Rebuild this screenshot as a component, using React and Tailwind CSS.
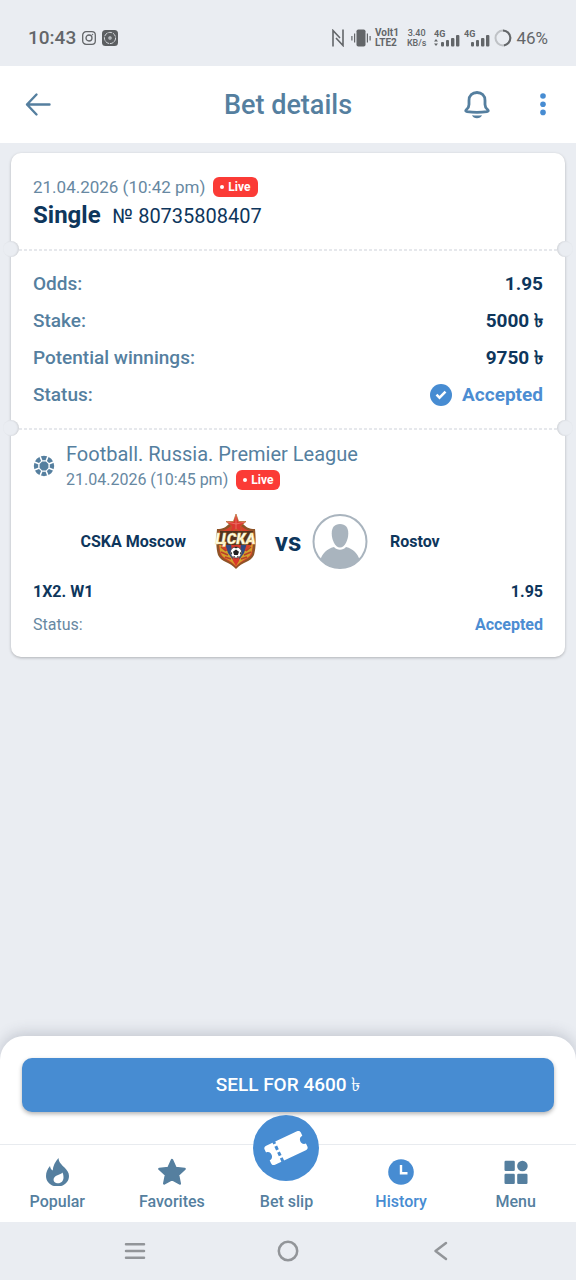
import React from "react";

const summary = [
  { label: "Odds:", value: "1.95" },
  { label: "Stake:", value: "5000 ৳" },
  { label: "Potential winnings:", value: "9750 ৳" },
];

function LiveBadge() {
  return (
    <span className="inline-flex h-5 items-center gap-1 rounded-md bg-[#fb3b36] px-[7px] text-xs font-bold text-white">
      <span className="h-1 w-1 rounded-full bg-white" />
      Live
    </span>
  );
}

// Perforated line with a round notch on each edge of the ticket
function TearLine() {
  return (
    <div className="relative h-0.5">
      <div className="mx-2 h-0.5 bg-[repeating-linear-gradient(90deg,#e6e8ec_0_3px,transparent_3px_5px)]" />
      <span className="absolute -left-2 -top-2 h-4 w-4 rounded-full bg-[#eaedf2] shadow-[inset_-1px_0_2px_rgba(0,0,0,0.12)]" />
      <span className="absolute -right-2 -top-2 h-4 w-4 rounded-full bg-[#eaedf2] shadow-[inset_1px_0_2px_rgba(0,0,0,0.12)]" />
    </div>
  );
}

function SignalIcon({ data }) {
  return (
    <svg width="26" height="18" viewBox="0 0 26 18" fill="#636669">
      <text x="0" y="8" fontSize="9" fontWeight="700" fontFamily="Roboto, sans-serif">4G</text>
      {data && <path d="M0 12.500l2-2.500 2 2.500zM0 14.500h4l-2 2.500z" />}
      <rect x="7" y="13" width="3" height="4.500" rx="1" />
      <rect x="12" y="11" width="3" height="6.500" rx="1" />
      <rect x="17" y="9" width="3.400" height="8.500" rx="1" />
      <rect x="22" y="6" width="3.400" height="11.500" rx="1" />
    </svg>
  );
}

function StatusBar() {
  return (
    <div className="flex h-[66px] items-center justify-between px-7 pt-2.5 text-[#636669]">
      <div className="flex items-center">
        <span className="text-[19px] leading-5 font-medium">10:43</span>
        <svg className="ml-1.5" width="14" height="14" viewBox="0 0 14 14" fill="none" stroke="#636669" strokeWidth="1.300">
          <rect x="0.700" y="0.700" width="12.600" height="12.600" rx="3.400" />
          <circle cx="7" cy="7" r="3" />
          <circle cx="10.500" cy="3.500" r="0.500" fill="#636669" strokeWidth="0.400" />
        </svg>
        <svg className="ml-1.5" width="16" height="16" viewBox="0 0 16 16" fill="none">
          <rect width="16" height="16" rx="3.500" fill="#5b5e61" />
          <circle cx="8" cy="8" r="5.600" stroke="#d5d8dc" strokeWidth="1" strokeDasharray="4 0.800" />
          <circle cx="8" cy="8" r="1.700" fill="#cfd2d6" />
          <circle cx="8" cy="8" r="0.600" fill="#5b5e61" />
        </svg>
      </div>
      <div className="flex items-center">
        <svg width="12" height="18" viewBox="0 0 12 18" fill="none" stroke="#636669" strokeWidth="1.600">
          <path d="M1 17.500V1.500L8 9M11 .500v16L4 9" />
        </svg>
        <svg className="ml-[7px]" width="20" height="18" viewBox="0 0 20 18" fill="#636669">
          <rect x="5.500" y="0.500" width="9" height="17" rx="1.800" />
          <path d="M3 4.500h1.200v9H3zM0.300 7h1.200v4.500H.3zM15.800 4.500H17v9h-1.200zM18.500 7h1.200v4.500h-1.200z" />
        </svg>
        <div className="ml-1 text-[10px] leading-[10px] font-bold">
          VoIt1
          <br />
          LTE2
        </div>
        <div className="ml-2 text-center text-[9px] leading-[10px] font-medium">
          3.40
          <br />
          KB/s
        </div>
        <div className="ml-2 flex gap-1">
          <SignalIcon data />
          <SignalIcon />
        </div>
        <svg className="ml-1" width="18" height="18" viewBox="0 0 18 18" fill="none" strokeWidth="2">
          <circle cx="9" cy="9" r="7.500" stroke="#bfc2c6" />
          <path d="M9 1.500a7.500 7.500 0 0 1 1 14.900" stroke="#636669" />
        </svg>
        <span className="ml-1 text-[17px] leading-5">46%</span>
      </div>
    </div>
  );
}

function Header() {
  return (
    <header className="grid h-[77px] grid-cols-[1fr_auto_1fr] items-center bg-white px-6 text-[#557f9f]">
      <button aria-label="Back" className="justify-self-start">
        <svg width="28" height="28" viewBox="0 0 28 28" fill="none" stroke="currentColor" strokeWidth="2.400" strokeLinecap="round" strokeLinejoin="round">
          <path d="M25.500 13.500H3M12.500 3.500L3 13.500l9.500 10" />
        </svg>
      </button>
      <h1 className="text-[27px] leading-8 font-medium">Bet details</h1>
      <div className="flex items-center gap-[43px] justify-self-end">
        <button aria-label="Notifications">
          <svg width="28" height="30" viewBox="0 0 28 30" fill="none" stroke="currentColor" strokeWidth="2.800" strokeLinejoin="round">
            <path d="M6 10.500C6 5.500 9.500 2.500 14 2.500s8 3 8 8v4c0 2.300 1 3.700 2.500 5c1.300 1.200 1 1.900-.5 2.100C17 22.600 11 22.600 4 21.600c-1.500-.2-1.800-.9-.5-2.100c1.500-1.300 2.500-2.700 2.500-5z" />
            <path d="M9 25.200c3.300 .5 6.700 .5 10 0c-.8 2-2.600 3-5 3s-4.200-1-5-3z" fill="currentColor" stroke="none" />
          </svg>
        </button>
        <button aria-label="More" className="text-[#478cd2]">
          <svg width="18" height="26" viewBox="0 0 18 26" fill="currentColor">
            <circle cx="9" cy="4" r="2.800" />
            <circle cx="9" cy="12.200" r="2.800" />
            <circle cx="9" cy="20.400" r="2.800" />
          </svg>
        </button>
      </div>
    </header>
  );
}

function FootballIcon() {
  return (
    <svg width="22" height="22" viewBox="0 0 22 22" fill="none">
      <circle cx="11" cy="11" r="7.800" stroke="#557f9f" strokeWidth="4.800" />
      <path d="M6.800 0.900l8.400 20.200M15.200 0.900L6.800 21.100M0.900 6.800l20.200 8.400M0.900 15.200l20.200-8.400" stroke="white" strokeWidth="1.500" />
      <circle cx="11" cy="11" r="5.800" fill="white" />
      <path d="M9.100 6.600h3.800l2.500 2.500v3.800l-2.500 2.500H9.100l-2.500-2.500V9.100z" fill="#557f9f" />
    </svg>
  );
}

function CskaLogo() {
  return (
    <svg width="56" height="56" viewBox="0 0 56 56">
      <path d="M9 15c6 0 9-2 12-5h14c3 3 6 5 12 5c1 11 1 19-1 26c-3 7-12 7-18 14c-6-7-15-7-18-14C8 34 8 26 9 15z" fill="#8e5427" />
      <path d="M11 17c6 0 9-3 12-5h10c3 2 6 5 12 5c1 10 0 16-1 23c-3 6-10 6-16 13c-6-7-13-7-16-13c-1-7-2-13-1-23z" fill="#d9402b" />
      <path d="M11 29c1 7 1 12 6 15s8 5 11 8c3-3 6-5 11-8s5-8 6-15l-7 8H18z" fill="#d3a22c" />
      <path d="M13 33l5 4M13 38l7 3M17 43l6 2M43 33l-5 4M43 38l-7 3M39 43l-6 2" stroke="#b8402a" strokeWidth="1.600" />
      <path d="M17 29h22l-3 10-8 11-8-11z" fill="#304a82" />
      <path d="M23 30h10l-2 17-3 5-3-5z" fill="#d9382b" />
      <path d="M28 0l2.600 7.500H38l-5.600 4.700 2 7.300L28 15l-6.400 4.500 2-7.300L18 7.500h7.400z" fill="#db3830" stroke="#b07028" strokeWidth="0.700" />
      <path d="M28 1v14M28 10l-9-2M28 10l9-2" stroke="#ee8074" strokeWidth="0.700" />
      <path d="M12 17h33l-2 14H10z" fill="#54321d" />
      <text x="27.500" y="30" textAnchor="middle" fontSize="15" fontWeight="900" fontStyle="italic" fontFamily="Roboto, sans-serif" fill="#fffbe8" stroke="#f3df91" strokeWidth="0.400">ЦСКА</text>
      <circle cx="28" cy="38.500" r="5.600" fill="#fff" stroke="#333" strokeWidth="0.600" />
      <path d="M28 35.500l3 2.200-1.200 3.400h-3.600L25 37.700zM26 33h4l-2 1.400zM22.600 37.500l1.500 1.400-.5 2.300zM33.400 37.500l-1.500 1.400 .5 2.300zM24.800 42.500l2-.2 .5 1.500zM31.200 42.500l-2-.2-.5 1.500z" fill="#222" />
    </svg>
  );
}

function AvatarIcon() {
  return (
    <svg width="56" height="56" viewBox="0 0 56 56">
      <circle cx="28" cy="27.500" r="26.500" fill="white" stroke="#a9b4be" strokeWidth="2" />
      <path d="M28 10c5.500 0 8.300 3.500 8.300 9.500S33 33.500 28 33.500s-8.300-8-8.300-14s2.800-9.500 8.300-9.500z" fill="#a9b4be" />
      <path d="M8.500 45.500c2-6 6-10.500 13.500-12.500c3 3.500 9 3.500 12 0c7.500 2 11.500 6.500 13.500 12.500c-10 11.500-29 11.500-39 0z" fill="#a9b4be" />
    </svg>
  );
}

function Ticket() {
  return (
    <section className="mx-[11px] mt-2.5 rounded-[10px] bg-white text-[#0e365c] shadow-[0_1px_3px_rgba(0,0,0,0.25)]">
      <div className="px-[22px] pt-[22px] pb-[17px]">
        <div className="flex items-center gap-2 leading-6 text-[#6788a2]">
          <span className="text-[17px]">21.04.2026 (10:42 pm)</span>
          <LiveBadge />
        </div>
        <div className="flex items-baseline gap-3 leading-8">
          <h2 className="text-2xl leading-8 font-bold">Single</h2>
          <span className="text-xl leading-8">№ 80735808407</span>
        </div>
      </div>

      <TearLine />

      <dl className="px-[22px] pt-3.5 pb-[15px] text-[19px] leading-[37px] font-medium">
        {summary.map((row) => (
          <div key={row.label} className="flex justify-between">
            <dt className="text-[#557f9f]">{row.label}</dt>
            <dd className="font-bold">{row.value}</dd>
          </div>
        ))}
        <div className="flex justify-between">
          <dt className="text-[#557f9f]">Status:</dt>
          <dd className="flex items-center gap-2.5 font-bold text-[#4c8dd2]">
            <svg width="22" height="22" viewBox="0 0 22 22" fill="none">
              <circle cx="11" cy="11" r="11" fill="#478cd2" />
              <path d="M6.500 10.700l3 3 6-6" stroke="white" strokeWidth="2.500" />
            </svg>
            Accepted
          </dd>
        </div>
      </dl>

      <TearLine />

      <div className="px-[22px] pt-2.5 pb-5">
        <div className="flex items-center gap-[11px]">
          <FootballIcon />
          <div>
            <h3 className="text-[20px] leading-7 text-[#557f9f]">Football. Russia. Premier League</h3>
            <div className="flex items-center gap-2 leading-6 text-[#6788a2]">
              <span className="text-base">21.04.2026 (10:45 pm)</span>
              <LiveBadge />
            </div>
          </div>
        </div>

        <div className="mt-[22px] flex items-center text-base font-bold">
          <span className="flex-1 pr-[22px] text-right">CSKA Moscow</span>
          <CskaLogo />
          <span className="w-12 text-center text-[26px] leading-8">vs</span>
          <AvatarIcon />
          <span className="flex-1 pl-[22px]">Rostov</span>
        </div>

        <div className="mt-2.5 flex justify-between text-base leading-6 font-bold">
          <span>1X2. W1</span>
          <span>1.95</span>
        </div>
        <div className="mt-[9px] flex justify-between text-base leading-6">
          <span className="text-[#6788a2]">Status:</span>
          <span className="font-bold text-[#4c8dd2]">Accepted</span>
        </div>
      </div>
    </section>
  );
}

function NavItem({ label, active, children }) {
  return (
    <a
      href="#"
      className={`flex flex-col items-center gap-1.5 pt-[13px] pb-2.5 text-base leading-5 font-medium ${active ? "text-[#478cd2]" : "text-[#557f9f]"}`}
    >
      <svg width="28" height="28" viewBox="0 0 28 28" fill="currentColor">
        {children}
      </svg>
      {label}
    </a>
  );
}

function BottomNav() {
  return (
    <nav className="grid grid-cols-5 border-t border-[#e8ebef] bg-white pr-[3px]">
      <NavItem label="Popular">
        <path d="M15.500 0c.3 4.500 3 6.500 6 9.500c2.500 2.500 4.500 5 4.500 8.500C26 24 21 28.500 14.500 28.500S3 24 3 18c0-4 1.500-7 4-10c.3 2 1.200 3.500 2.700 4.500C10 8 12 4 15.500 0zM19.500 14.500c-1.500 2-6 2-8.200 5c-1.600 2.300-.5 5.200 2.700 5.700c4 .5 6.500-2 6.500-5.700c0-2-.3-3.500-1-5z" fillRule="evenodd" />
      </NavItem>
      <NavItem label="Favorites">
        <path d="M14 2l3.600 7.900 9 1-6.500 6 1.700 8.600-7.800-4.200-7.800 4.200 1.700-8.600-6.500-6 9-1z" stroke="currentColor" strokeWidth="2.400" strokeLinejoin="round" />
      </NavItem>
      <div className="relative">
        <a href="#" className="flex flex-col items-center pt-[47px] text-base leading-5 font-medium text-[#557f9f]">
          <span className="absolute -top-[30px] left-1/2 flex h-[66px] w-[66px] -translate-x-1/2 items-center justify-center rounded-full bg-[#478cd2]">
            <svg width="46" height="46" viewBox="0 0 46 46">
              <g transform="rotate(-25 23 23)">
                <path d="M6 12.500h34c2 0 3 1 3 3v3.200c-5.500-.2-5.500 8.800 0 8.600v3.200c0 2-1 3-3 3H6c-2 0-3-1-3-3v-3.200c5.500 .2 5.500-8.800 0-8.600v-3.200c0-2 1-3 3-3z" fill="white" />
                <path d="M14.500 12v23" stroke="#478cd2" strokeWidth="3" strokeDasharray="2.500 2.500 4 2.500 4 2.500 4" />
              </g>
            </svg>
          </span>
          Bet slip
        </a>
      </div>
      <NavItem label="History" active>
        <circle cx="14" cy="14" r="12.800" />
        <path d="M14 7v8.300h6.500" fill="none" stroke="white" strokeWidth="2.400" />
      </NavItem>
      <NavItem label="Menu">
        <rect x="2.500" y="2.700" width="10.300" height="10.300" rx="1.200" />
        <circle cx="20.400" cy="8" r="5.300" />
        <rect x="2.500" y="15.700" width="10.300" height="10.300" rx="1.200" />
        <rect x="15.200" y="15.700" width="10.300" height="10.300" rx="1.200" />
      </NavItem>
    </nav>
  );
}

function SystemNav() {
  return (
    <div className="grid h-[58px] grid-cols-3 place-items-center px-[59px] text-[#929599]">
      <button aria-label="Recent apps">
        <svg width="22" height="22" viewBox="0 0 22 22" stroke="currentColor" strokeWidth="2.500" strokeLinecap="round">
          <path d="M2 4.200h18M2 11h18M2 17.800h18" />
        </svg>
      </button>
      <button aria-label="Home">
        <svg width="22" height="22" viewBox="0 0 22 22" fill="none" stroke="currentColor" strokeWidth="2.500">
          <circle cx="11" cy="11" r="9.200" />
        </svg>
      </button>
      <button aria-label="System back">
        <svg width="22" height="22" viewBox="0 0 22 22" fill="none" stroke="currentColor" strokeWidth="2.500" strokeLinecap="round" strokeLinejoin="round">
          <path d="M16 3L5.500 11 16 19" />
        </svg>
      </button>
    </div>
  );
}

export default function App() {
  return (
    <div className="flex min-h-screen flex-col bg-[#eaedf2] font-[Roboto,sans-serif]">
      <StatusBar />
      <Header />
      <main className="flex-1 pb-6">
        <Ticket />
      </main>
      <footer>
        <div className="rounded-t-3xl bg-white px-[22px] pt-[22px] pb-8 shadow-[0_-3px_14px_rgba(60,70,90,0.22)]">
          <button className="h-[54px] w-full rounded-[10px] bg-[#478cd2] text-[19px] font-medium text-white shadow-[0_2px_4px_rgba(0,0,0,0.3)]">
            SELL FOR 4600 ৳
          </button>
        </div>
        <div className="relative">
          <BottomNav />
        </div>
        <SystemNav />
      </footer>
    </div>
  );
}
